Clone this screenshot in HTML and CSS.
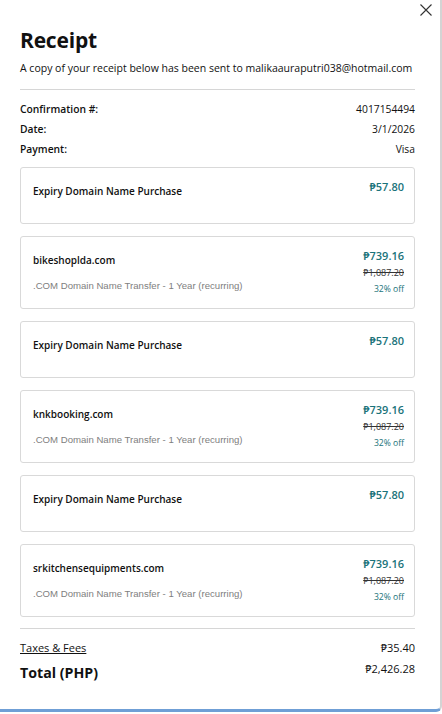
FILE: index.html
```html
<!DOCTYPE html>
<html lang="en">
<head>
<meta charset="utf-8">
<title>Receipt</title>
<link rel="stylesheet" href="styles.css">
</head>
<body>
<div class="window">
  <button class="close" aria-label="Close">
    <svg width="12" height="12" viewBox="0 0 12 12"><path d="M0.5 0.5 L11.5 11.5 M11.5 0.5 L0.5 11.5" stroke="#333" stroke-width="1.1" fill="none"/></svg>
  </button>
  <main class="content">
    <h1 class="title">Receipt</h1>
    <p class="note">A copy of your receipt below has been sent to malikaauraputri038@hotmail.com</p>
    <hr class="rule rule-top">
    <dl class="meta">
      <div class="meta-row"><dt>Confirmation #:</dt><dd>4017154494</dd></div>
      <div class="meta-row"><dt>Date:</dt><dd>3/1/2026</dd></div>
      <div class="meta-row"><dt>Payment:</dt><dd>Visa</dd></div>
    </dl>
    <div class="items">
      <div class="card card-simple">
        <div class="left"><div class="name">Expiry Domain Name Purchase</div></div>
        <div class="right"><div class="price">₱57.80</div></div>
      </div>
      <div class="card">
        <div class="left"><div class="name">bikeshoplda.com</div><div class="sub">.COM Domain Name Transfer - 1 Year (recurring)</div></div>
        <div class="right"><div class="price">₱739.16</div><div class="old">₱1,087.20</div><div class="off">32% off</div></div>
      </div>
      <div class="card card-simple">
        <div class="left"><div class="name">Expiry Domain Name Purchase</div></div>
        <div class="right"><div class="price">₱57.80</div></div>
      </div>
      <div class="card">
        <div class="left"><div class="name">knkbooking.com</div><div class="sub">.COM Domain Name Transfer - 1 Year (recurring)</div></div>
        <div class="right"><div class="price">₱739.16</div><div class="old">₱1,087.20</div><div class="off">32% off</div></div>
      </div>
      <div class="card card-simple">
        <div class="left"><div class="name">Expiry Domain Name Purchase</div></div>
        <div class="right"><div class="price">₱57.80</div></div>
      </div>
      <div class="card">
        <div class="left"><div class="name">srkitchensequipments.com</div><div class="sub">.COM Domain Name Transfer - 1 Year (recurring)</div></div>
        <div class="right"><div class="price">₱739.16</div><div class="old">₱1,087.20</div><div class="off">32% off</div></div>
      </div>
    </div>
    <hr class="rule rule-bottom">
    <div class="fees"><a class="fees-link" href="#">Taxes &amp; Fees</a><span>₱35.40</span></div>
    <div class="total"><span class="total-label">Total (PHP)</span><span class="total-value">₱2,426.28</span></div>
  </main>
</div>
</body>
</html>
```
FILE: styles.css
```css
html, body {
  margin: 0;
  padding: 0;
  background: #ffffff;
}
body {
  font-family: "Open Sans", "Noto Sans", sans-serif;
  color: #111;
}
.window {
  position: relative;
  box-sizing: border-box;
  width: 442px;
  height: 712px;
  border-right: 2px solid #d4d4d4;
  border-bottom: 3px solid #6f9fd6;
  border-bottom-right-radius: 6px;
  background: #fff;
}
.close {
  position: absolute;
  top: 4px;
  left: 420px;
  width: 12px;
  height: 12px;
  padding: 0;
  border: 0;
  background: none;
  display: block;
}
.close svg { display: block; }
.content {
  padding: 27px 25px 0 20px;
}
.title {
  margin: 0;
  font-size: 21px;
  line-height: 26px;
  font-weight: 700;
  letter-spacing: -0.2px;
}
.note {
  margin: 7px 0 0;
  font-size: 10.5px;
  line-height: 17px;
  white-space: nowrap;
  color: #111;
}
.rule {
  border: 0;
  border-top: 1px solid #d6d6d6;
  margin: 0;
}
.rule-top { margin-top: 12px; }
.meta {
  margin: 9px 0 0;
}
.meta-row {
  display: flex;
  justify-content: space-between;
  font-size: 10.3px;
  line-height: 20px;
}
.meta-row dt { font-weight: 600; }
.meta-row dd { margin: 0; }
.items {
  display: flex;
  flex-direction: column;
  gap: 12px;
  margin-top: 8px;
}
.card {
  display: flex;
  justify-content: space-between;
  border: 1px solid #d9d9d9;
  border-radius: 3px;
  padding: 11px 10px 12px 12px;
}
.card-simple { padding-bottom: 22px; }
.name {
  margin-top: 2px;
  font-size: 10px;
  line-height: 20px;
  font-weight: 600;
}
.sub {
  margin-top: 6px;
  font-family: "Liberation Sans", Arial, sans-serif;
  font-size: 9.6px;
  line-height: 20px;
  color: #808080;
}
.right {
  display: flex;
  flex-direction: column;
  align-items: flex-end;
}
.price {
  font-size: 11px;
  line-height: 16px;
  font-weight: 600;
  color: #1a737a;
}
.old {
  font-size: 9px;
  line-height: 18px;
  text-decoration: line-through;
  color: #333;
}
.off {
  font-size: 8.6px;
  line-height: 14px;
  color: #1a737a;
}
.rule-bottom { margin-top: 11px; }
.fees {
  display: flex;
  justify-content: space-between;
  margin-top: 10px;
  font-size: 11px;
  line-height: 18px;
}
.fees-link {
  color: #111;
  text-decoration: underline;
}
.total {
  display: flex;
  justify-content: space-between;
  align-items: flex-start;
  margin-top: 4px;
}
.total-label {
  font-size: 14.2px;
  line-height: 24px;
  font-weight: 700;
}
.total-value {
  font-size: 11px;
  line-height: 16px;
}
```
